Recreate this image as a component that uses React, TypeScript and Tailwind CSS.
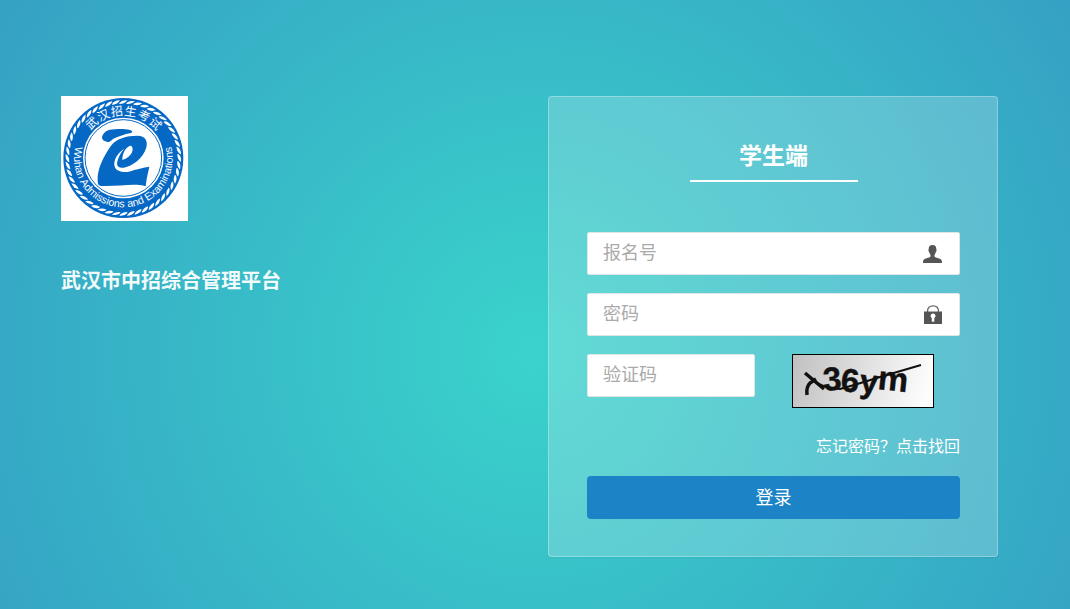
const cjk = "font-['Open_Sans','Noto_Sans_CJK_SC',sans-serif]";

const inputClass =
  'block h-[43px] w-full rounded-xs border border-[#dfe6e6] bg-white pb-1 pl-[15px] text-lg text-gray-700 outline-none placeholder:text-[#aaaaaa]';

const sealChars = ['武', '汉', '招', '生', '考', '试'];
const ropeSteps = Array.from({ length: 48 }, (_, i) => i * 7.5);

function Logo() {
  return (
    <svg viewBox="0 0 381 375" className="h-[125px] w-[127px] bg-white" role="img" aria-label="武汉招生考试">
      <defs>
        <path id="seal-bottom" d="M 59 112 A 148 148 0 1 0 315 112" />
      </defs>
      <circle cx="187" cy="186" r="180" fill="#0568c4" />
      {ropeSteps.map((deg) => (
        <g key={deg} transform={`rotate(${deg} 187 186)`}>
          <path d="M175 21 Q183 11 199 13 Q192 24 175 24 Z" fill="#fff" />
        </g>
      ))}
      <circle cx="187" cy="186" r="121" fill="#fff" />
      <circle cx="187" cy="186" r="115" fill="none" stroke="#0568c4" strokeWidth="3" />
      <path
        fill="#0568c4"
        d="M123 124 C125 112 135 104 146 101 C164 99 190 97 207 102 C214 104 216 109 210 111 C190 115 173 121 157 128 C149 134 146 140 137 137 C128 136 123 131 123 124 Z"
      />
      <path
        fill="#0568c4"
        d="M110 254 C108 222 125 184 150 149 C166 128 195 119 230 119 C253 119 261 136 256 154 C250 183 233 207 207 221 C226 225 244 213 265 212 C261 232 256 249 254 271 C219 260 177 272 119 270 C111 268 110 262 110 254 Z"
      />
      <path fill="#fff" d="M184 192 C183 169 198 149 210 149 C222 158 212 183 184 192 Z" />
      <path
        fill="#fff"
        d="M190 158 C175 174 166 197 169 208 C172 219 191 216 207 209 C232 197 248 178 256 156 C262 178 248 204 226 218 C202 234 163 232 160 208 C158 189 172 169 190 158 Z"
      />
      {sealChars.map((char, i) => (
        <text
          key={char}
          x="187"
          y="58"
          fontSize="36"
          fill="#fff"
          textAnchor="middle"
          transform={`rotate(${i * 17 - 42} 187 186)`}
          className="font-['Noto_Sans_CJK_SC',sans-serif]"
        >
          {char}
        </text>
      ))}
      <text fill="#fff" fontSize="32" className="font-['Liberation_Sans',sans-serif]">
        <textPath href="#seal-bottom" startOffset="50%" textAnchor="middle">Wuhan Admissions and Examinations</textPath>
      </text>
    </svg>
  );
}

function UserIcon() {
  return (
    <svg viewBox="0 0 19 18" className="h-[18px] w-[19px]" fill="#555" aria-hidden="true">
      <path d="M9.500 0C6.800 0 5.500 1.800 5.700 4.500C5.100 4.800 5.500 6.700 6.200 6.900C6.500 8.500 7.100 9.200 7.500 9.700V11.500C6.500 13 1.800 13.100 .7 14.800C.1 15.700 0 17 0 18H19C19 17 18.900 15.700 18.300 14.800C17.200 13.100 12.500 13 11.500 11.500V9.700C11.900 9.200 12.500 8.500 12.800 6.900C13.500 6.700 13.900 4.800 13.300 4.500C13.500 1.800 12.200 0 9.500 0Z" />
    </svg>
  );
}

function LockIcon() {
  return (
    <svg viewBox="0 0 18 19" className="h-[19px] w-[18px]" aria-hidden="true">
      <path d="M3.500 8V6.200C3.500 2.800 5.700 .8 9 .8S14.500 2.800 14.500 6.200V8" fill="none" stroke="#666" strokeWidth="1.300" />
      <path d="M0 6.500H18V19H0Z" fill="#555" />
      <path d="M9 8.500A2.400 2.400 0 0 0 7.800 13V16.800H10.300V13A2.400 2.400 0 0 0 9 8.500Z" fill="#fff" />
    </svg>
  );
}

function Captcha() {
  return (
    <svg viewBox="0 0 142 54" className="block h-[54px] w-[142px]" role="img" aria-label="验证码">
      <defs>
        <linearGradient id="captcha-bg" x1="0" y1="0" x2="1" y2="0.1">
          <stop offset="0" stopColor="#c0c0c0" />
          <stop offset="1" stopColor="#fcfcfc" />
        </linearGradient>
      </defs>
      <rect x="0.5" y="0.5" width="141" height="53" fill="url(#captcha-bg)" stroke="#000" />
      <g fill="#111" stroke="#111" strokeWidth="0.4" fontWeight="700" className="font-['Liberation_Sans',sans-serif]">
        <text x="32" y="37" fontSize="33" transform="rotate(-5 32 37)">3</text>
        <text x="48" y="37" fontSize="33" transform="rotate(5 48 37)">6</text>
        <text x="67" y="38" fontSize="33" transform="rotate(5 67 38)">y</text>
        <text x="85" y="35" fontSize="34" transform="rotate(6 85 35)">m</text>
      </g>
      <path d="M15 41Q14 33 18 29L24 25M13 19L32 35" fill="none" stroke="#111" strokeWidth="3.500" />
      <path d="M18 24Q29 34 48 35Q66 30 88 23L129 11" fill="none" stroke="#111" strokeWidth="2" />
    </svg>
  );
}

export default function App() {
  return (
    <div
      className={`flex min-h-screen items-start justify-between bg-[radial-gradient(circle_at_50%_58%,#3ad3cb_0%,#35a1c4_100%)] pt-24 pr-[72px] pl-[61px] text-white ${cjk}`}
    >
      <header>
        <Logo />
        <h1 className="mt-11 text-xl leading-8 font-bold text-white/95">武汉市中招综合管理平台</h1>
      </header>

      <main className="w-[450px] rounded border border-white/30 bg-white/20 pt-10 pr-[37px] pb-[37px] pl-[38px] shadow-xs">
        <h2 className="mx-auto w-[168px] border-b-2 border-white pb-[7px] text-center text-[23px] leading-9 font-bold">
          学生端
        </h2>
        <form className="mt-[50px]" onSubmit={(e) => e.preventDefault()}>
          <div className="relative">
            <input type="text" aria-label="报名号" placeholder="报名号" className={inputClass} />
            <span className="pointer-events-none absolute inset-y-0 right-[18px] flex items-center">
              <UserIcon />
            </span>
          </div>
          <div className="relative mt-[18px]">
            <input type="password" aria-label="密码" placeholder="密码" className={inputClass} />
            <span className="pointer-events-none absolute inset-y-0 right-[18px] flex items-center">
              <LockIcon />
            </span>
          </div>
          <div className="mt-[18px] flex items-start justify-between pr-[26px]">
            <div className="w-[168px]">
              <input type="text" aria-label="验证码" placeholder="验证码" className={inputClass} />
            </div>
            <button type="button" aria-label="换一张验证码">
              <Captcha />
            </button>
          </div>
          <div className="mt-6 text-right text-base leading-7">
            <a href="#forgot">忘记密码？点击找回</a>
          </div>
          <button type="submit" className="mt-4 h-[43px] w-full rounded bg-[#1c84c6] pb-0.5 text-lg text-white">
            登录
          </button>
        </form>
      </main>
    </div>
  );
}
